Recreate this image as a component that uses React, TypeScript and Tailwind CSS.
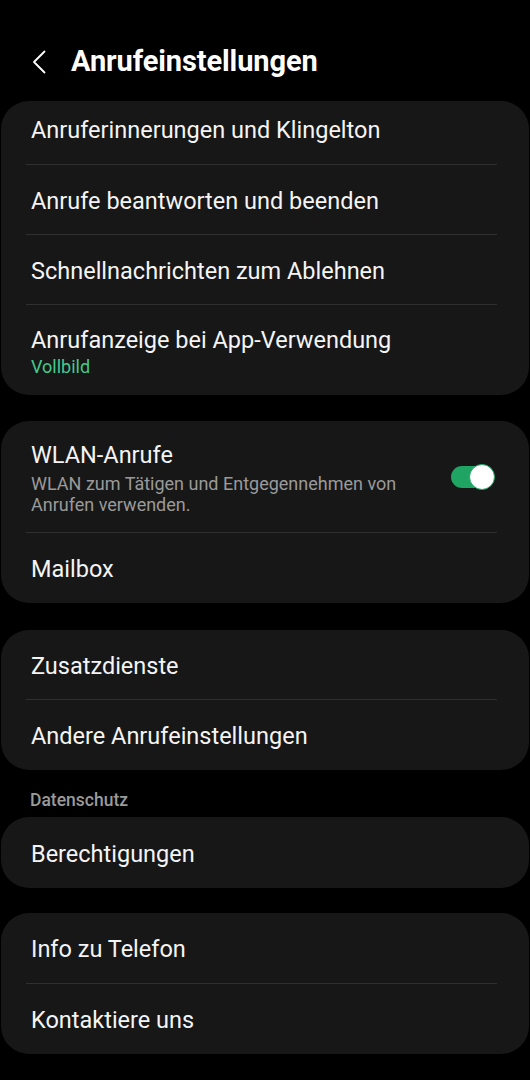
import React, { useState } from 'react';

const font = { fontFamily: 'Roboto, "Noto Sans", sans-serif' };

function Divider() {
  return <div className="ml-[25px] mr-[32px] h-px bg-[#2f2f2f]" />;
}

function Row({ title, h = 'h-[69px]' }: { title: string; h?: string }) {
  return (
    <div className={`${h} flex items-center px-[30px] pt-[4px] text-[23.5px] text-[#f4f4f4]`}>
      {title}
    </div>
  );
}

function Card({ children }: { children: React.ReactNode }) {
  return <div className="mx-px rounded-[28px] bg-[#171717] overflow-hidden">{children}</div>;
}

export default function App() {
  const [wifiCalls, setWifiCalls] = useState(true);

  return (
    <div className="w-[530px] h-[1080px] bg-black overflow-hidden" style={font}>
      {/* Header */}
      <div className="h-[101px] pt-[42px]">
        <div className="h-[40px] flex items-center">
          <svg width="14" height="24" viewBox="0 0 14 24" className="ml-[32px]">
            <path d="M12.5 1.5 L2 12 L12.5 22.5" fill="none" stroke="#ffffff" strokeWidth="1.8" strokeLinecap="round" strokeLinejoin="round" />
          </svg>
          <h1 className="ml-[25px] text-[29px] font-bold text-white tracking-[-0.1px]">Anrufeinstellungen</h1>
        </div>
      </div>

      <div className="flex flex-col">
        <Card>
          <div className="h-[63px] flex items-center px-[30px] pb-[4px] text-[23.5px] text-[#f4f4f4]">
            Anruferinnerungen und Klingelton
          </div>
          <Divider />
          <Row title="Anrufe beantworten und beenden" />
          <Divider />
          <Row title="Schnellnachrichten zum Ablehnen" />
          <Divider />
          <div className="h-[90px] flex flex-col justify-center px-[30px] pt-[3px]">
            <div className="text-[23.5px] text-[#f4f4f4] leading-[30px]">Anrufanzeige bei App-Verwendung</div>
            <div className="text-[18px] text-[#45c98b] leading-[24px]">Vollbild</div>
          </div>
        </Card>

        <div className="h-[26px]" />

        <Card>
          <div className="h-[111px] flex items-center pl-[30px] pr-[38px] pt-[1px]">
            <div className="flex-1">
              <div className="text-[23.5px] text-[#f4f4f4] leading-[32px]">WLAN-Anrufe</div>
              <div className="text-[18px] text-[#9a9a9a] leading-[21px] mt-[2px] pr-[40px]">
                WLAN zum Tätigen und Entgegennehmen von Anrufen verwenden.
              </div>
            </div>
            <button
              onClick={() => setWifiCalls(!wifiCalls)}
              className={`relative w-[40px] h-[22px] rounded-full ${wifiCalls ? 'bg-[#1fa463]' : 'bg-[#555555]'}`}
            >
              <span
                className={`absolute top-[-2px] w-[26px] h-[26px] rounded-full bg-white border border-[#1fa463] ${wifiCalls ? 'right-[-4px]' : 'left-[-4px]'}`}
              />
            </button>
          </div>
          <Divider />
          <Row title="Mailbox" h="h-[70px]" />
        </Card>

        <div className="h-[27px]" />

        <Card>
          <Row title="Zusatzdienste" />
          <Divider />
          <Row title="Andere Anrufeinstellungen" h="h-[70px]" />
        </Card>

        <div className="h-[47px] flex items-end pb-[4px] px-[30px] text-[17.5px] font-medium text-[#9a9a9a]">
          Datenschutz
        </div>

        <Card>
          <Row title="Berechtigungen" h="h-[71px]" />
        </Card>

        <div className="h-[25px]" />

        <Card>
          <Row title="Info zu Telefon" h="h-[70px]" />
          <Divider />
          <Row title="Kontaktiere uns" h="h-[70px]" />
        </Card>
      </div>
    </div>
  );
}
